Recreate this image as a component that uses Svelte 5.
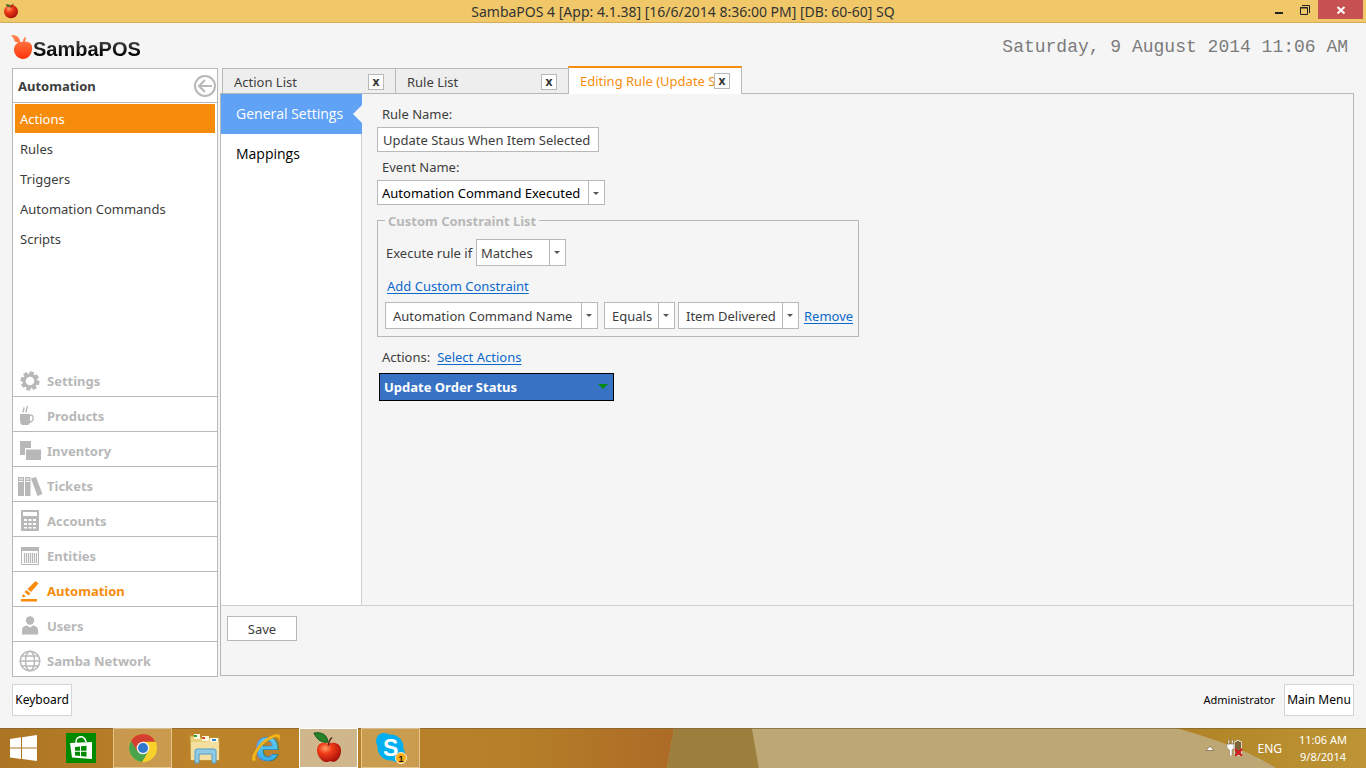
<script>
	const categories = ['Settings', 'Products', 'Inventory', 'Tickets', 'Accounts', 'Entities', 'Automation', 'Users', 'Samba Network'];
	const commands = ['Actions', 'Rules', 'Triggers', 'Automation Commands', 'Scripts'];
	const tabs = ['Action List', 'Rule List', 'Editing Rule (Update S'];
	const sections = ['General Settings', 'Mappings'];
	const tasks = ['Store', 'Chrome', 'Explorer', 'Internet Explorer', 'SambaPOS', 'Skype'];

	let category = $state('Automation');
	let command = $state('Actions');
	let tab = $state('Editing Rule (Update S');
	let section = $state('General Settings');
	let ruleName = $state('Update Staus When Item Selected');
</script>

{#snippet combo(value, size, label, id)}
	<span class="combo {size}">
		<select {id} aria-label={label}>
			<option>{value}</option>
		</select>
	</span>
{/snippet}

{#snippet categoryIcon(name)}
	<svg class="cat-icon" viewBox="0 0 26 24" aria-hidden="true">
		{#if name === 'Settings'}
			<circle cx="13" cy="12" r="5.8" fill="none" stroke="currentColor" stroke-width="3" />
			{#each [0, 45, 90, 135, 180, 225, 270, 315] as angle}
				<path d="M10.6 5.700 11 2.500h4l.4 3.200z" fill="currentColor" transform="rotate({angle + 12} 13 12)" />
			{/each}
		{:else if name === 'Products'}
			<path d="M3 10h10v6.500q0 3-1.700 4.500H4.700Q3 19.500 3 16.500z" fill="currentColor" />
			<path d="M13 11.500c4-1.400 5 5.500-1 7M6.500 8.500c-2-2.500 2-2.500 0-5M9.500 8.500c-2-3 2-3.500.5-6.500" fill="none" stroke="currentColor" stroke-width="1.400" />
		{:else if name === 'Inventory'}
			<path d="M3 2h11v7H8v7H3z" fill="currentColor" />
			<path d="M9 10.500h15v10.500H9z" fill="currentColor" />
		{:else if name === 'Tickets'}
			<path d="M1 3h6v19H1zM8 3h5.500v19H8zM14 4.500l5-1.500 6.500 17-5 2z" fill="currentColor" />
			<path d="M2 5h4M2 7.500h4M9 5h3.500M9 7.500h3.500" stroke="#fff" />
		{:else if name === 'Accounts'}
			<rect x="4" y="1" width="18" height="21" rx="1" fill="currentColor" />
			<path d="M6 3h14v4H6z" fill="#fff" />
			<path d="M7 10h3v2H7zM11.500 10h3v2h-3zM16 10h3v2h-3zM7 14h3v2H7zM11.500 14h3v2h-3zM16 14h3v2h-3zM7 18h3v1.500H7zM11.500 18h3v1.500h-3zM16 18h3v1.500h-3z" fill="#fff" />
		{:else if name === 'Entities'}
			<path d="M4 3h18v4H4z" fill="currentColor" />
			<path d="M4.500 7v13.500h17V7" fill="none" stroke="currentColor" />
			<path d="M7.500 9v10M9.500 9v10M11.500 9v10M13.500 9v10M15.500 9v10M17.500 9v10M19.500 9v10" stroke="currentColor" stroke-width="1.200" />
		{:else if name === 'Automation'}
			<path d="M4 20h16v2.500H4zM5 18.500l1-3.500 3 2.500zM7.500 13l2-2 4 3.500-2 2zM10.500 10 18.500 2l3 2.500-7.500 8.500z" fill="currentColor" />
		{:else if name === 'Users'}
			<circle cx="13" cy="6.500" r="4.200" fill="currentColor" />
			<path d="M5 20.500v-4.500q0-4 5-4.500l3 2 3-2q5 .5 5 4.500v4.500z" fill="currentColor" />
		{:else}
			<g fill="none" stroke="currentColor" stroke-width="1.500">
				<circle cx="13" cy="12" r="9.800" />
				<ellipse cx="13" cy="12" rx="4.500" ry="9.800" />
				<path d="M4.500 7h17M3.200 12h19.600M4.500 17h17" />
			</g>
		{/if}
	</svg>
{/snippet}

{#snippet apple()}
	<path d="M15 12c-4-3-11-1-11 6 0 6 5 12 9 12 2 0 3-.8 4-.8s2 .5 3.500.5c4 0 8-6 7.500-12-.5-7-8-8.500-13-5.700z" fill="url(#apple-red)" />
	<path d="M15.500 13.500c0-3 1-6 3.500-8" fill="none" stroke="#5b2c14" stroke-width="1.600" />
	<path d="M15 10C9 11 4 8 1 1c7-1 13 1 14 9z" fill="#278326" stroke="#12551b" />
{/snippet}

{#snippet taskIcon(name)}
	<svg class="task-icon" viewBox="0 0 32 32" aria-hidden="true">
		{#if name === 'Store'}
			<path d="M1 1h30v30H1z" fill="#008a00" />
			<path d="M5 11l22-1v17L7 25.500z" fill="#fff" />
			<path d="M11 11c-1-7 9-9 10-1" fill="none" stroke="#fff" stroke-width="1.600" />
			<path d="M10 15l5-.6v4.300h-5zM16 14.300l5.500-.6v5H16zM10 19.700h5V24l-5-.5zM16 19.700h5.500v5L16 24z" fill="#008a00" />
		{:else if name === 'Chrome'}
			<circle cx="16" cy="16" r="14" fill="#f8d12b" />
			<path d="M3.900 9A14 14 0 0 1 28.500 9.700H16L10 19.500z" fill="#d43f31" />
			<path d="M3.900 9A14 14 0 0 0 15 30l6.500-11L10.500 19.500z" fill="#4aa34b" />
			<circle cx="16" cy="16" r="6.300" fill="#f3f4f2" />
			<circle cx="16" cy="16" r="5" fill="#2f78cc" />
		{:else if name === 'Explorer'}
			<path d="M1 4h9l2 2h18v22H2z" fill="#e9cf78" stroke="#c6a142" />
			<path d="M5 2h6v5H5zM13 4h7v5h-7zM21 6h8v5h-8z" fill="#fff8df" />
			<path d="M5 3h3v2H5z" fill="#20a639" />
			<path d="M13 5h3v2h-3z" fill="#d94b2f" />
			<path d="M23 7h4v2h-4z" fill="#3a85cc" />
			<path d="M2 10h28v18H2z" fill="#f5dfa0" />
			<path d="M6 19q0-2 2-2h17q2 0 2 2v12h-4v-9H10v9H6z" fill="#91cce7" stroke="#549cc3" />
		{:else if name === 'Internet Explorer'}
			<text x="4" y="29" font-size="44" font-weight="700" fill="url(#ie-blue)" stroke="#1378ba" stroke-width=".6">e</text>
			<path d="M3 29C-4 29 8 8 22 3c8-3 8 2 6 6 0-4-2-5-6-3C11 10 2 24 5 28z" fill="#f5b91b" stroke="#dc9010" stroke-width=".5" />
		{:else if name === 'SambaPOS'}
			{@render apple()}
		{:else}
			<circle cx="9" cy="9" r="8" fill="#00aff0" />
			<circle cx="15.500" cy="15.500" r="13" fill="#00aff0" />
			<circle cx="22" cy="22" r="8" fill="#00aff0" />
			<text x="8" y="24" font-size="23" font-weight="700" fill="#fff">S</text>
			<circle cx="26" cy="26" r="5.500" fill="#ffae19" stroke="#fff3cb" />
			<text x="23.500" y="29.500" font-size="9" font-weight="700" fill="#111">1</text>
		{/if}
	</svg>
{/snippet}

<div class="desktop">
	<header class="titlebar">
		<svg class="app-icon" viewBox="0 0 32 32" aria-hidden="true">
			<defs>
				<radialGradient id="apple-red" cx=".35" cy=".3" r=".8">
					<stop offset="0" stop-color="#ff9c65" />
					<stop offset=".35" stop-color="#ef3b18" />
					<stop offset="1" stop-color="#9c0906" />
				</radialGradient>
				<linearGradient id="ie-blue" x1="0" y1="0" x2="0" y2="1">
					<stop offset="0" stop-color="#8be1fb" />
					<stop offset="1" stop-color="#25a2e1" />
				</linearGradient>
				<linearGradient id="logo-red" x1="0" y1="0" x2="0" y2="1">
					<stop offset="0" stop-color="#ff8b55" />
					<stop offset="1" stop-color="#ff3209" />
				</linearGradient>
			</defs>
			<ellipse cx="16" cy="17" rx="14" ry="13.500" fill="url(#apple-red)" />
			<path d="M16 9c1-4 3-6 5-7" stroke="#55250f" stroke-width="2" fill="none" />
			<path d="M15 8Q8 9 5 3q9-2 10 5z" fill="#377127" />
		</svg>
		<h1>SambaPOS 4 [App: 4.1.38] [16/6/2014 8:36:00 PM] [DB: 60-60] SQ</h1>
		<div class="window-controls">
			<button aria-label="Minimize">
				<svg viewBox="0 0 12 12"><path d="M2 9h8" stroke="#222" stroke-width="2" /></svg>
			</button>
			<button aria-label="Restore">
				<svg viewBox="0 0 12 12"><path d="M1.500 3.500h7v7h-7zM1 4h8M3 1.500h7.500V9" fill="none" stroke="#222" /></svg>
			</button>
			<button class="close" aria-label="Close">
				<svg viewBox="0 0 12 12"><path d="M2.500 3l7 6.500M9.500 3l-7 6.500" stroke="#fff" stroke-width="2" /></svg>
			</button>
		</div>
	</header>

	<div class="brand-row">
		<div class="brand">
			<svg viewBox="0 0 22 26" aria-hidden="true">
				<path d="M0 1c5-.5 9 2 9 7-3 1-6 0-6-3zM12 8c0-3 1-5 3-5l-1 5c5-1 8 3 7 8-1 6-5 9-9 9s-9-4-9-9 4-9 9-8z" fill="url(#logo-red)" />
			</svg>
			<span>SambaPOS</span>
		</div>
		<time>Saturday, 9 August 2014 11:06 AM</time>
	</div>

	<main>
		<aside>
			<div class="side-head">
				<h2>Automation</h2>
				<button aria-label="Collapse">
					<svg viewBox="0 0 22 22"><circle cx="11" cy="11" r="10" /><path d="M18 11H5M11 5l-6 6 6 6" /></svg>
				</button>
			</div>
			<nav class="commands">
				{#each commands as name}
					<button class:active={command === name} onclick={() => (command = name)}>{name}</button>
				{/each}
			</nav>
			<nav class="categories">
				{#each categories as name}
					<button class:active={category === name} onclick={() => (category = name)}>
						{@render categoryIcon(name)}
						{name}
					</button>
				{/each}
			</nav>
		</aside>

		<section class="workspace">
			<div class="tabs">
				{#each tabs as name}
					<div class="tab" class:active={tab === name}>
						<button class="tab-title" onclick={() => (tab = name)}>{name}</button>
						<button class="tab-close" aria-label="Close {name}">x</button>
					</div>
				{/each}
			</div>
			<div class="panel">
				<div class="editor">
					<nav class="sections">
						{#each sections as name}
							<button class:active={section === name} onclick={() => (section = name)}>{name}</button>
						{/each}
					</nav>
					<form onsubmit={(e) => e.preventDefault()}>
						<label for="rule-name">Rule Name:</label>
						<input id="rule-name" type="text" bind:value={ruleName} />
						<label for="event-name">Event Name:</label>
						{@render combo('Automation Command Executed', 'event', undefined, 'event-name')}

						<fieldset>
							<legend>Custom Constraint List</legend>
							<div class="match-row">
								<label for="match">Execute rule if</label>
								{@render combo('Matches', 'match', undefined, 'match')}
							</div>
							<a class="add-link" href="#add">Add Custom Constraint</a>
							<div class="constraint-row">
								{@render combo('Automation Command Name', 'field', 'Field')}
								{@render combo('Equals', 'operator', 'Operator')}
								{@render combo('Item Delivered', 'value', 'Value')}
								<a href="#remove">Remove</a>
							</div>
						</fieldset>

						<div class="actions-row">
							<span>Actions:</span>
							<a href="#select">Select Actions</a>
						</div>
						<button class="action-item">
							Update Order Status
							<svg viewBox="0 0 10 6" aria-hidden="true"><path d="M0 0h10L5 5z" fill="#078a12" /></svg>
						</button>
					</form>
				</div>
				<div class="save-row">
					<button>Save</button>
				</div>
			</div>
		</section>
	</main>

	<div class="status-row">
		<button>Keyboard</button>
		<span>Administrator</span>
		<button class="menu-button">Main Menu</button>
	</div>

	<footer class="taskbar">
		<svg class="wallpaper" viewBox="0 0 1366 40" preserveAspectRatio="none" aria-hidden="true">
			<defs>
				<linearGradient id="amber">
					<stop offset="0" stop-color="#ad7423" />
					<stop offset=".3" stop-color="#bd832b" />
					<stop offset=".75" stop-color="#b68028" />
					<stop offset="1" stop-color="#ad6b26" />
				</linearGradient>
				<linearGradient id="gold">
					<stop offset="0" stop-color="#b08325" />
					<stop offset="1" stop-color="#bd9536" />
				</linearGradient>
			</defs>
			<path d="M0 0h674l-7 40H0z" fill="url(#amber)" />
			<path d="M674 0h78l7 40h-92z" fill="#9c7f3d" />
			<path d="M752 0h430l90 40H759z" fill="#bda775" />
			<path d="M1176 0h190v40h-90q-35-22-100-40z" fill="url(#gold)" />
			<path d="M0 .5h1366" stroke="#7d6330" stroke-opacity=".7" />
		</svg>
		<button class="start" aria-label="Start">
			<svg viewBox="0 0 28 26"><path d="M0 4l11-1.700V12.500H0zM12 2.200 27 0v12.500H12zM0 13.500h11V24L0 22.500zM12 13.500h15V26l-15-2z" fill="#fff" /></svg>
		</button>
		{#each tasks as name}
			<button class="task" class:running={name === 'Chrome' || name === 'Skype'} class:current={name === 'SambaPOS'} aria-label={name}>
				{@render taskIcon(name)}
			</button>
		{/each}
		<div class="tray">
			<svg class="tray-arrow" viewBox="0 0 10 6" aria-hidden="true"><path d="M1 5.500 5 1l4 4.500z" fill="#fff" stroke="#655232" stroke-width=".6" /></svg>
			<svg class="battery" viewBox="0 0 16 16" aria-hidden="true">
				<path d="M7.500 3.500v-2h2v-1h3v1h2v14h-7z" fill="#7c6435" stroke="#ddd5c3" />
				<path d="M0 4h7v4L5 10v6H2.500v-6L0 8zM1 0h1.500v4H1zM4.500 0H6v4H4.500z" fill="#fff" stroke="#5d4728" stroke-width=".4" />
				<path d="M8 9l7 7M15 9l-7 7" stroke="#d51b20" stroke-width="2.200" />
			</svg>
			<span>ENG</span>
			<div class="clock">
				<span>11:06 AM</span>
				<span>9/8/2014</span>
			</div>
		</div>
	</footer>
</div>

<style>
	:global(body) {
		background: #f5f5f5;
	}

	.desktop {
		min-height: 100vh;
		display: flex;
		flex-direction: column;
		font-family: 'Noto Sans', 'Open Sans', sans-serif;
		font-size: 13px;
		line-height: 20px;
		color: #3d3d3d;
		background: #f5f5f5;
	}

	.desktop, .desktop * {
		box-sizing: border-box;
	}

	button, input, select {
		font: inherit;
		color: inherit;
		border: 0;
		border-radius: 0;
		background: none;
		padding: 0;
		margin: 0;
	}

	a {
		color: #0b69cc;
		text-underline-offset: 2px;
	}

	h1, h2 {
		margin: 0;
	}

	/* Window title */
	.titlebar {
		display: grid;
		grid-template-columns: 1fr auto 1fr;
		height: 23px;
		background: #f0c869;
		border-bottom: 1px solid #d4ad5a;
	}

	.app-icon {
		width: 16px;
		height: 16px;
		margin: 3px;
	}

	h1 {
		font-size: 14px;
		line-height: 23px;
		font-weight: 400;
		color: #333;
	}

	.window-controls {
		display: flex;
		justify-content: flex-end;
		padding-right: 3px;
	}

	.window-controls button {
		width: 26px;
		height: 19px;
		display: grid;
		place-items: center;
	}

	.window-controls svg {
		width: 12px;
		height: 12px;
	}

	.window-controls .close {
		width: 45px;
		background: #c75050;
	}

	/* Brand and date */
	.brand-row {
		height: 45px;
		display: flex;
		justify-content: space-between;
		align-items: center;
		padding: 2px 18px 0 11px;
	}

	.brand {
		display: flex;
		align-items: center;
	}

	.brand svg {
		width: 22px;
		height: 26px;
	}

	.brand span {
		padding-top: 4px;
		font: 700 20px/26px 'Liberation Sans', sans-serif;
		color: transparent;
		background: linear-gradient(#555 20%, #000 75%);
		background-clip: text;
	}

	time {
		font: 18px/24px 'Liberation Mono', monospace;
		color: #7b7b7b;
	}

	main {
		flex: 1;
		display: flex;
		gap: 2px;
		padding: 0 12px;
	}

	/* Sidebar */
	aside {
		width: 206px;
		display: flex;
		flex-direction: column;
		background: #fff;
		border: 1px solid #b8b8b8;
		border-bottom: 0;
	}

	.side-head {
		height: 34px;
		display: flex;
		align-items: center;
		justify-content: space-between;
		padding: 0 1px 0 5px;
		border-bottom: 1px solid #b8b8b8;
	}

	.side-head h2 {
		font-size: 13px;
		line-height: 20px;
	}

	.side-head button {
		height: 22px;
	}

	.side-head svg {
		display: block;
		width: 22px;
		height: 22px;
		fill: none;
		stroke: #b8b8b8;
		stroke-width: 2;
	}

	.commands {
		flex: 1;
		display: flex;
		flex-direction: column;
		gap: 1px;
		padding: 1px 2px;
	}

	.commands button {
		height: 29px;
		padding: 0 5px;
		text-align: left;
	}

	.commands .active {
		color: #fff;
		background: #f78c0c;
	}

	.categories button {
		width: 100%;
		height: 35px;
		display: flex;
		align-items: center;
		gap: 4px;
		padding: 4px 4px 0;
		font-weight: 700;
		color: #b8b8b8;
		border-bottom: 1px solid #b8b8b8;
	}

	.categories .active {
		color: #f78c0c;
	}

	.cat-icon {
		width: 26px;
		height: 24px;
	}

	/* Tabs */
	.workspace {
		flex: 1;
		display: flex;
		flex-direction: column;
	}

	.tabs {
		height: 26px;
		display: flex;
		align-items: flex-end;
		padding-left: 2px;
		margin-bottom: -1px;
	}

	.tab {
		width: 173px;
		height: 26px;
		display: flex;
		align-items: center;
		padding: 2px 11px 0;
		background: #eee;
		border: 1px solid #b8b8b8;
		border-right: 0;
	}

	/* Sits over the panel border so the open tab joins its page */
	.tab.active {
		position: relative;
		width: 174px;
		height: 28px;
		padding: 0 11px;
		color: #f78c0c;
		background: #fff;
		border-top: 2px solid #f78c0c;
		border-right: 1px solid #b8b8b8;
		border-bottom: 0;
	}

	.tab-title {
		flex: 1;
		min-width: 0;
		overflow: hidden;
		white-space: nowrap;
		text-align: left;
	}

	.tab-close {
		width: 16px;
		height: 16px;
		font-size: 12px;
		line-height: 12px;
		font-weight: 700;
		color: #333;
		background: #fff;
		border: 1px solid #b8b8b8;
	}

	.panel {
		flex: 1;
		display: flex;
		flex-direction: column;
		border: 1px solid #b8b8b8;
		margin-bottom: 1px;
	}

	.editor {
		flex: 1;
		display: flex;
	}

	.sections {
		width: 141px;
		display: flex;
		flex-direction: column;
		background: #fff;
		border-right: 1px solid #d0d0d0;
	}

	.sections button {
		height: 40px;
		padding: 0 15px;
		font-family: 'Open Sans', sans-serif;
		font-size: 14px;
		text-align: left;
		white-space: nowrap;
		color: #000;
	}

	.sections .active {
		position: relative;
		margin-right: -1px;
		color: #fff;
		background: #60a2f6;
	}

	.sections .active::after {
		content: '';
		position: absolute;
		right: 0;
		top: 11px;
		width: 9px;
		height: 18px;
		background: #f5f5f5;
		clip-path: polygon(100% 0, 0 50%, 100% 100%);
	}

	/* Rule form */
	form {
		flex: 1;
		display: flex;
		flex-direction: column;
		align-items: flex-start;
		padding: 10px 15px;
	}

	form > label {
		padding-left: 5px;
	}

	input {
		width: 222px;
		height: 25px;
		margin: 3px 0 5px;
		padding: 0 5px;
		background: #fff;
		border: 1px solid #b8b8b8;
	}

	.combo {
		position: relative;
		display: block;
		flex-shrink: 0;
		height: 27px;
		background: #fff;
		border: 1px solid #b8b8b8;
	}

	.combo select {
		display: block;
		appearance: none;
		width: 100%;
		height: 100%;
		padding: 0 17px 0 7px;
	}

	.combo::before {
		content: '';
		position: absolute;
		right: 15px;
		top: 0;
		bottom: 0;
		border-left: 1px solid #b8b8b8;
	}

	.combo::after {
		content: '';
		position: absolute;
		right: 5px;
		top: 11px;
		width: 6px;
		height: 3px;
		background: #555;
		clip-path: polygon(0 0, 100% 0, 50% 100%);
		pointer-events: none;
	}

	.combo.event {
		width: 228px;
		height: 25px;
		margin-top: 3px;
		color: #000;
	}

	.combo.event select, .combo.match select {
		padding-left: 4px;
	}

	.combo.match {
		width: 90px;
	}

	.combo.field {
		width: 213px;
	}

	.combo.operator {
		width: 71px;
		margin-left: 6px;
	}

	.combo.value {
		width: 121px;
		margin: 0 5px 0 3px;
	}

	fieldset {
		width: 482px;
		min-width: 0;
		margin: 4px 0 0;
		padding: 8px 4px 7px 7px;
		border: 1px solid #b8b8b8;
	}

	legend {
		padding: 2px 3px 0;
		font-weight: 700;
		color: #b8b8b8;
	}

	.match-row {
		display: flex;
		align-items: center;
		justify-content: space-between;
		width: 181px;
		padding-left: 1px;
		white-space: nowrap;
	}

	.add-link {
		display: block;
		width: max-content;
		margin: 10px 2px 6px;
	}

	.constraint-row {
		display: flex;
		align-items: center;
	}

	.actions-row {
		display: flex;
		gap: 7px;
		padding: 10px 5px 6px;
	}

	.action-item {
		width: 235px;
		height: 28px;
		display: flex;
		align-items: center;
		justify-content: space-between;
		margin-left: 2px;
		padding: 0 5px 0 4px;
		font-weight: 700;
		color: #fff;
		background: #3872c4;
		border: 1px solid #000;
	}

	.action-item svg {
		width: 10px;
		height: 6px;
	}

	.save-row {
		height: 70px;
		padding: 10px 6px;
		border-top: 1px solid #d0d0d0;
	}

	.save-row button {
		width: 70px;
		height: 25px;
		background: #fff;
		border: 1px solid #b8b8b8;
	}

	/* Status row */
	.status-row {
		height: 51px;
		display: flex;
		align-items: center;
		padding: 0 12px 6px;
		font-size: 12px;
		color: #000;
	}

	.status-row span {
		margin: 0 9px 0 auto;
		font-size: 11px;
	}

	.status-row button {
		width: 60px;
		height: 32px;
		background: #fff;
		border: 1px solid #d4d4d4;
	}

	.status-row .menu-button {
		width: 70px;
	}

	/* Taskbar */
	.taskbar {
		position: relative;
		height: 40px;
		display: flex;
		gap: 3px;
		color: #fff;
		background: #bda775;
	}

	.taskbar > * {
		position: relative;
	}

	.taskbar .wallpaper {
		position: absolute;
		inset: 0;
		width: 100%;
		height: 100%;
	}

	.start {
		width: 48px;
		display: grid;
		place-items: center;
	}

	.start svg {
		width: 28px;
		height: 26px;
	}

	.task {
		width: 59px;
		height: 40px;
		display: grid;
		place-items: center;
		border: 1px solid transparent;
	}

	.running {
		background: rgba(255, 242, 200, 0.24);
		border-color: rgba(255, 240, 205, 0.5);
	}

	.current {
		background: rgba(218, 211, 194, 0.65);
		border-color: #fff;
	}

	.task-icon {
		width: 32px;
		height: 32px;
		overflow: visible;
		font-family: 'Liberation Sans', sans-serif;
	}

	.tray {
		display: flex;
		align-items: center;
		margin-left: auto;
		padding-right: 19px;
		font-size: 12px;
		line-height: 17px;
	}

	.tray-arrow {
		width: 10px;
		height: 6px;
		margin-right: 12px;
	}

	.battery {
		width: 16px;
		height: 16px;
		margin-right: 14px;
	}

	.clock {
		display: flex;
		flex-direction: column;
		align-items: center;
		margin-left: 17px;
		font-size: 11px;
	}
</style>
